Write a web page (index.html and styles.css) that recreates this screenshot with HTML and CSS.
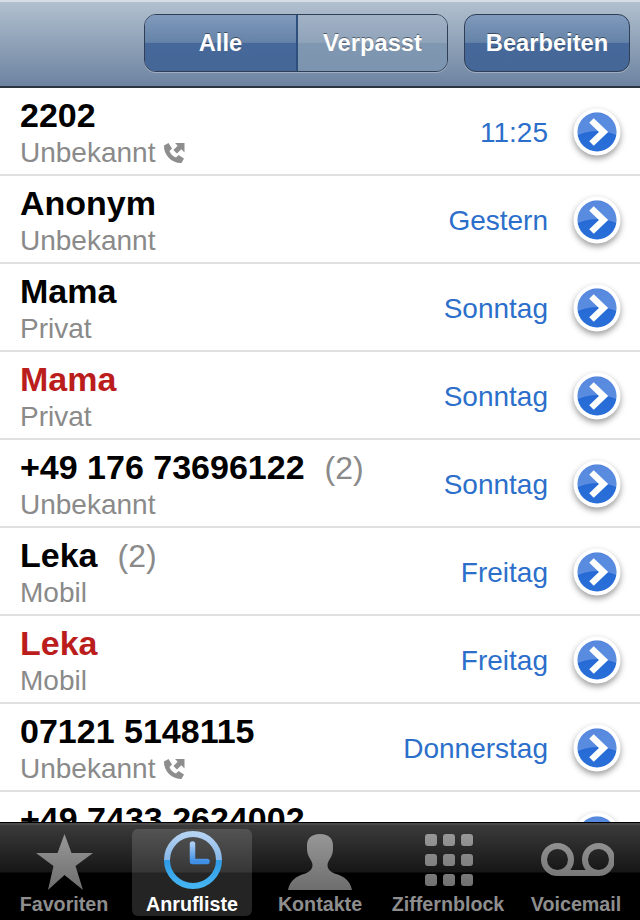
FILE: index.html
```html
<!DOCTYPE html>
<html lang="de">
<head>
  <meta charset="UTF-8">
  <meta name="viewport" content="width=device-width, initial-scale=1.0">
  <title>Anrufliste</title>
  <link rel="stylesheet" href="styles.css">
</head>
<body>
  <svg class="defs" width="0" height="0">
    <defs>
      <linearGradient id="disc" x1="0" y1="0" x2="0" y2="1">
        <stop offset="0" stop-color="#2364d4"/>
        <stop offset="1" stop-color="#2a70d8"/>
      </linearGradient>
      <linearGradient id="tabgray" gradientUnits="userSpaceOnUse" x1="0" y1="0" x2="0" y2="64">
        <stop offset="0" stop-color="#9c9c9c"/>
        <stop offset="1" stop-color="#6c6c6c"/>
      </linearGradient>
      <linearGradient id="clockring" x1="0" y1="0" x2="0" y2="1">
        <stop offset="0" stop-color="#b5d3f2"/>
        <stop offset="0.5" stop-color="#86b6e8"/>
        <stop offset="0.51" stop-color="#2f9be6"/>
        <stop offset="1" stop-color="#45b4f2"/>
      </linearGradient>
      <linearGradient id="clockhand" x1="0" y1="0" x2="0" y2="1">
        <stop offset="0" stop-color="#a9ccf2"/>
        <stop offset="1" stop-color="#3f8fe6"/>
      </linearGradient>
      <symbol id="more" viewBox="0 0 56 56">
        <circle cx="28" cy="27" r="23.500" fill="#fff"/>
        <circle cx="28" cy="27" r="19.500" fill="url(#disc)"/>
        <path d="M8.700 30 A19.500 19.500 0 1 1 47.300 30 Q28 22 8.700 30 Z" fill="#fff" opacity="0.24"/>
        <path d="M22.500 15.500 L34.500 27 L22.500 38.500" fill="none" stroke="#fff" stroke-width="6.500"/>
      </symbol>
      <symbol id="callback" viewBox="0 0 24 24">
        <path d="M2 4.500 L6.500 2 L10 7.500 L7.500 10 C8.500 13 11 15.500 14 16.500 L16.500 14 L22 17.500 L19.500 22 C10 22.500 1.500 14 2 4.500 Z" fill="#8e8e8e"/>
        <path d="M13 2 H22.500 V11.500 L19.300 8.300 L15 12.600 L11.400 9 L15.700 4.700 Z" fill="#8e8e8e"/>
      </symbol>
    </defs>
  </svg>

  <div class="app">
    <header class="topbar">
      <div class="segmented">
        <div class="seg seg-on">Alle</div>
        <div class="seg seg-off">Verpasst</div>
      </div>
      <button class="edit-btn">Bearbeiten</button>
    </header>

    <ul class="calls">
      <li class="call">
        <div class="who">
          <div class="name">2202</div>
          <div class="kind">Unbekannt <svg class="call-icon"><use href="#callback"/></svg></div>
        </div>
        <div class="when">11:25</div>
        <svg class="more"><use href="#more"/></svg>
      </li>
      <li class="call">
        <div class="who">
          <div class="name">Anonym</div>
          <div class="kind">Unbekannt</div>
        </div>
        <div class="when">Gestern</div>
        <svg class="more"><use href="#more"/></svg>
      </li>
      <li class="call">
        <div class="who">
          <div class="name">Mama</div>
          <div class="kind">Privat</div>
        </div>
        <div class="when">Sonntag</div>
        <svg class="more"><use href="#more"/></svg>
      </li>
      <li class="call missed">
        <div class="who">
          <div class="name">Mama</div>
          <div class="kind">Privat</div>
        </div>
        <div class="when">Sonntag</div>
        <svg class="more"><use href="#more"/></svg>
      </li>
      <li class="call">
        <div class="who">
          <div class="name">+49 176 73696122<span class="count">(2)</span></div>
          <div class="kind">Unbekannt</div>
        </div>
        <div class="when">Sonntag</div>
        <svg class="more"><use href="#more"/></svg>
      </li>
      <li class="call">
        <div class="who">
          <div class="name">Leka<span class="count">(2)</span></div>
          <div class="kind">Mobil</div>
        </div>
        <div class="when">Freitag</div>
        <svg class="more"><use href="#more"/></svg>
      </li>
      <li class="call missed">
        <div class="who">
          <div class="name">Leka</div>
          <div class="kind">Mobil</div>
        </div>
        <div class="when">Freitag</div>
        <svg class="more"><use href="#more"/></svg>
      </li>
      <li class="call">
        <div class="who">
          <div class="name">07121 5148115</div>
          <div class="kind">Unbekannt <svg class="call-icon"><use href="#callback"/></svg></div>
        </div>
        <div class="when">Donnerstag</div>
        <svg class="more"><use href="#more"/></svg>
      </li>
      <li class="call">
        <div class="who">
          <div class="name">+49 7433 2624002</div>
        </div>
        <svg class="more"><use href="#more"/></svg>
      </li>
    </ul>

    <nav class="tabbar">
      <div class="tab">
        <svg class="tab-icon" viewBox="0 0 64 64">
          <path d="M32.500 6 L39.500 25 L61 25 L43.500 38 L51 62 L32.500 47 L16 62 L21.500 38 L4 25 L25.500 25 Z" fill="url(#tabgray)"/>
        </svg>
        <span>Favoriten</span>
      </div>
      <div class="tab tab-on">
        <svg class="tab-icon" viewBox="0 0 64 64">
          <circle cx="33" cy="32" r="26" fill="none" stroke="url(#clockring)" stroke-width="6"/>
          <path d="M32.500 16 V33.500 H47" fill="none" stroke="url(#clockhand)" stroke-width="5.500" stroke-linecap="round" stroke-linejoin="round"/>
        </svg>
        <span>Anrufliste</span>
      </div>
      <div class="tab">
        <svg class="tab-icon" viewBox="0 0 64 64">
          <path d="M32 6 C41 6 45.500 11 45 19 C45 22 45 25 43 29 C41.500 32 39.500 34 39.500 37 C39.500 41 42 44 48 46 C55 48 62 52 64 62 L0 62 C2 52 9 48 16 46 C22 44 24.500 41 24.500 37 C24.500 34 22.500 32 21 29 C19 25 19 22 19 19 C18.500 11 23 6 32 6 Z" fill="url(#tabgray)"/>
        </svg>
        <span>Kontakte</span>
      </div>
      <div class="tab">
        <svg class="tab-icon" viewBox="0 0 64 64">
          <g fill="url(#tabgray)">
            <rect x="9" y="6" width="12" height="12" rx="3"/><rect x="27" y="6" width="12" height="12" rx="3"/><rect x="45" y="6" width="12" height="12" rx="3"/>
            <rect x="9" y="26" width="12" height="12" rx="3"/><rect x="27" y="26" width="12" height="12" rx="3"/><rect x="45" y="26" width="12" height="12" rx="3"/>
            <rect x="9" y="46" width="12" height="12" rx="3"/><rect x="27" y="46" width="12" height="12" rx="3"/><rect x="45" y="46" width="12" height="12" rx="3"/>
          </g>
        </svg>
        <span>Ziffernblock</span>
      </div>
      <div class="tab">
        <svg class="tab-icon icon-wide" viewBox="0 0 76 64">
          <g fill="none" stroke="url(#tabgray)" stroke-width="6">
            <circle cx="19.500" cy="31.500" r="13.500"/>
            <circle cx="60.500" cy="31.500" r="13.500"/>
            <path d="M19.500 45 H60.500"/>
          </g>
        </svg>
        <span>Voicemail</span>
      </div>
    </nav>
  </div>
</body>
</html>
```

FILE: styles.css
```css
* {
  box-sizing: border-box;
}

body {
  margin: 0;
  font-family: "Liberation Sans", Arial, sans-serif;
  background: white;
}

.defs {
  position: absolute;
}

.app {
  display: flex;
  flex-direction: column;
  height: 920px;
  overflow: hidden;
}

/* Top bar */
.topbar {
  flex: none;
  display: flex;
  justify-content: flex-end;
  align-items: flex-start;
  gap: 16px;
  height: 88px;
  padding: 12px 10px 0 0;
  background: linear-gradient(#b2c0cf, #8ea1b7 50%, #6d83a1);
  border-top: 2px solid #d6dde5;
  border-bottom: 2px solid #2c3440;
}

.segmented {
  display: flex;
  width: 304px;
  height: 58px;
  border: 1px solid #2f3f55;
  border-radius: 12px;
  overflow: hidden;
  box-shadow: 0 1px 0 rgba(255, 255, 255, 0.3);
}

.seg {
  display: flex;
  align-items: center;
  justify-content: center;
  color: white;
  font-size: 23.700px;
  font-weight: bold;
  text-shadow: 0 -1px 0 rgba(0, 0, 0, 0.45);
}

.seg-on {
  width: 153px;
  background: linear-gradient(#7f9abc, #6583a8 49%, #46689a 50%, #456797);
  border-right: 2px solid #2d4f7e;
}

.seg-off {
  flex: 1;
  background: linear-gradient(#a2b2c6, #8fa3b9 49%, #7f97b1 50%, #7c94af);
}

.edit-btn {
  width: 166px;
  height: 58px;
  margin: 0;
  padding: 0;
  border: 1px solid #2f3f55;
  border-radius: 12px;
  background: linear-gradient(#7f9abc, #6583a8 49%, #46689a 50%, #456797);
  box-shadow: 0 1px 0 rgba(255, 255, 255, 0.3);
  color: white;
  font-family: inherit;
  font-size: 23.700px;
  font-weight: bold;
  text-shadow: 0 -1px 0 rgba(0, 0, 0, 0.45);
}

/* Call list */
.calls {
  flex: 1;
  min-height: 0;
  margin: 0;
  padding: 0;
  list-style: none;
  overflow: hidden;
}

.call {
  display: flex;
  align-items: center;
  height: 88px;
  padding: 0 19px 0 20px;
  border-bottom: 2px solid #e0e0e0;
}

.who {
  flex: 1;
  align-self: flex-start;
  min-width: 0;
  padding-top: 8px;
}

.name {
  height: 40px;
  color: black;
  font-size: 34px;
  font-weight: bold;
  line-height: 38px;
  white-space: nowrap;
}

.missed .name {
  color: #bb1d1d;
}

.count {
  margin-left: 20px;
  color: #8a8a8a;
  font-size: 32px;
  font-weight: normal;
}

.kind {
  display: flex;
  align-items: center;
  gap: 7px;
  height: 34px;
  color: #8a8a8a;
  font-size: 28px;
  line-height: 34px;
}

.call-icon {
  width: 24px;
  height: 24px;
}

.when {
  flex: none;
  margin-top: 4px;
  color: #2c6fcb;
  font-size: 28px;
}

.more {
  flex: none;
  width: 56px;
  height: 56px;
  margin: 4px -4px 0 21px;
  filter: drop-shadow(0 3px 3px rgba(0, 0, 0, 0.4));
}

/* Tab bar */
.tabbar {
  flex: none;
  display: flex;
  height: 98px;
  padding: 6px 0 4px;
  background: linear-gradient(#3c3c3c, #161616 49px, #000 50px);
  border-top: 1px solid #000;
  box-shadow: inset 0 2px 0 #4a4a4a;
}

.tab {
  flex: 1;
  display: flex;
  flex-direction: column;
  align-items: center;
  justify-content: flex-end;
  margin: 0 4px;
  border-radius: 6px;
  color: #8e8e8e;
  font-size: 19.700px;
  font-weight: bold;
  line-height: 24px;
  white-space: nowrap;
}

.tab-on {
  background: rgba(255, 255, 255, 0.14);
  color: white;
}

.tab-icon {
  flex: none;
  width: 64px;
  height: 64px;
}

.icon-wide {
  width: 76px;
}
```
